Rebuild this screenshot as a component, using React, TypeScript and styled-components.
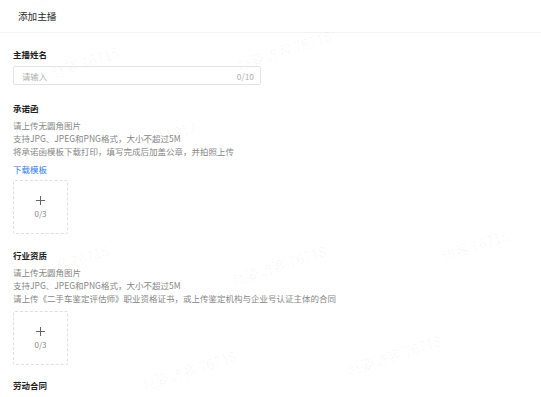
import React, { FC } from 'react'
import styled, { createGlobalStyle } from 'styled-components'

const GlobalStyle = createGlobalStyle`
  html, body {
    margin: 0;
    padding: 0;
    background: #fff;
  }
  body {
    font-family: 'Noto Sans CJK SC', 'Noto Sans', sans-serif;
    color: #333;
  }
`

const Page = styled.div`
  position: relative;
  width: 541px;
  height: 397px;
  overflow: hidden;
  background: #fff;
`

const Header = styled.div`
  height: 33px;
  display: flex;
  align-items: center;
  padding: 0 18px;
  box-sizing: border-box;
  border-bottom: 1px solid #f3f3f3;
  font-size: 9.6px;
  color: #2a2a2a;
`

const Body = styled.div`
  display: flex;
  flex-direction: column;
  padding: 15px 13px 0;
`

const Field = styled.div<{ gap: number }>`
  display: flex;
  flex-direction: column;
  margin-bottom: ${(p) => p.gap}px;
`

const Label = styled.div`
  font-size: 8.5px;
  font-weight: 700;
  line-height: 12px;
  color: #1f1f1f;
`

const InputBox = styled.div`
  margin-top: 6px;
  width: 248px;
  height: 19px;
  box-sizing: border-box;
  border: 1px solid #e4e4e4;
  border-radius: 2px;
  display: flex;
  align-items: center;
  justify-content: space-between;
  padding: 0 6px 0 8px;
  font-size: 8.4px;
  color: #b0b0b0;
`

const Hints = styled.div`
  margin-top: 5px;
  display: flex;
  flex-direction: column;
`

const Hint = styled.div`
  font-size: 8.5px;
  line-height: 13px;
  color: #878787;
  white-space: nowrap;
`

const Link = styled.a`
  margin-top: 5px;
  font-size: 8.5px;
  line-height: 12px;
  color: #2f7bf5;
  text-decoration: none;
`

const Upload = styled.div<{ top: number }>`
  margin-top: ${(p) => p.top}px;
  width: 55px;
  height: 54px;
  box-sizing: border-box;
  border: 1px dashed #e0e0e0;
  border-radius: 2px;
  display: flex;
  flex-direction: column;
  align-items: center;
  justify-content: center;
  gap: 3px;
`

const Plus = styled.svg`
  width: 11px;
  height: 11px;
`

const Count = styled.div`
  font-size: 8px;
  line-height: 10px;
  color: #858585;
`

const Watermark = styled.div`
  position: absolute;
  font-size: 14px;
  color: rgba(0, 0, 0, 0.035);
  transform: rotate(-18deg);
  white-space: nowrap;
  pointer-events: none;
`

const UploadBox: FC<{ top: number }> = ({ top }) => (
  <Upload top={top}>
    <Plus viewBox="0 0 12 12">
      <path d="M6 1v10M1 6h10" stroke="#666" strokeWidth="1.1" fill="none" />
    </Plus>
    <Count>0/3</Count>
  </Upload>
)

const marks = [
  { x: 50, y: 52, t: '赵姿 76718' },
  { x: 235, y: 40, t: '赵姿访客 76718' },
  { x: 135, y: 125, t: '赵姿 7212' },
  { x: 40, y: 250, t: '访客 76718' },
  { x: 230, y: 255, t: '赵姿访客 76718' },
  { x: 140, y: 360, t: '赵姿访客 76718' },
  { x: 345, y: 345, t: '赵姿访客 76718' },
  { x: 440, y: 235, t: '访客 76718' },
]

export default function App() {
  return (
    <Page>
      <GlobalStyle />
      <Header>添加主播</Header>
      <Body>
        <Field gap={17}>
          <Label>主播姓名</Label>
          <InputBox>
            <span>请输入</span>
            <span>0/10</span>
          </InputBox>
        </Field>
        <Field gap={15}>
          <Label>承诺函</Label>
          <Hints>
            <Hint>请上传无圆角图片</Hint>
            <Hint>支持JPG、JPEG和PNG格式，大小不超过5M</Hint>
            <Hint>将承诺函模板下载打印，填写完成后加盖公章，并拍照上传</Hint>
          </Hints>
          <Link href="#">下载模板</Link>
          <UploadBox top={5} />
        </Field>
        <Field gap={14}>
          <Label>行业资质</Label>
          <Hints>
            <Hint>请上传无圆角图片</Hint>
            <Hint>支持JPG、JPEG和PNG格式，大小不超过5M</Hint>
            <Hint>请上传《二手车鉴定评估师》职业资格证书，或上传鉴定机构与企业号认证主体的合同</Hint>
          </Hints>
          <UploadBox top={6} />
        </Field>
        <Field gap={0}>
          <Label>劳动合同</Label>
        </Field>
      </Body>
      {marks.map((m, i) => (
        <Watermark key={i} style={{ left: m.x, top: m.y }}>
          {m.t}
        </Watermark>
      ))}
    </Page>
  )
}
